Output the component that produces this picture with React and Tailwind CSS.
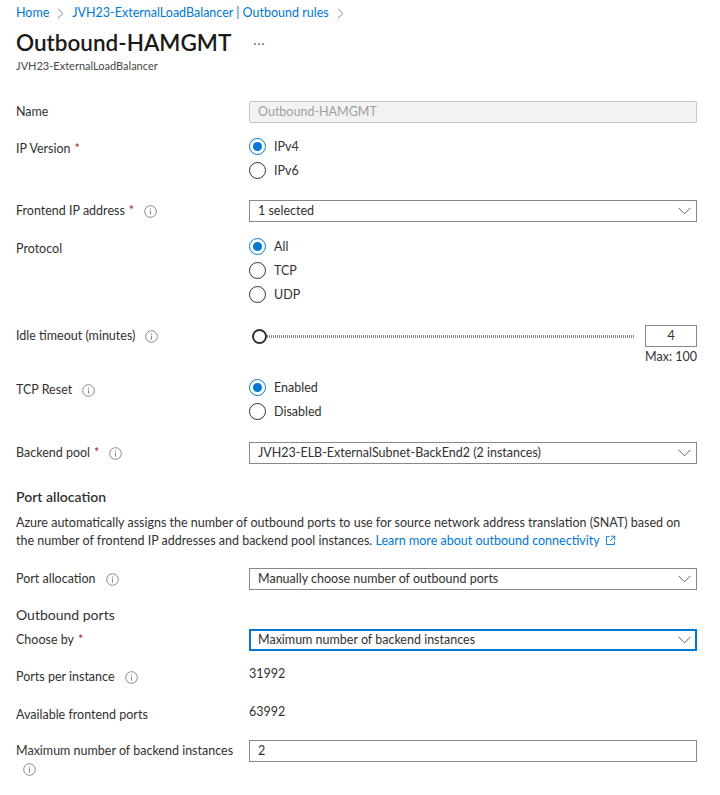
import React from 'react';

const font = { fontFamily: '"Segoe UI", Lato, "Liberation Sans", sans-serif' };

const InfoIcon = ({ className = '' }) => (
  <svg width="13" height="13" viewBox="0 0 13 13" className={`block shrink-0 ${className}`}>
    <circle cx="6.5" cy="6.5" r="5.8" fill="none" stroke="#8a8886" strokeWidth="1" />
    <line x1="6.5" y1="5.6" x2="6.5" y2="9.6" stroke="#8a8886" strokeWidth="1" />
    <circle cx="6.5" cy="3.9" r="0.7" fill="#8a8886" />
  </svg>
);

const Chevron = () => (
  <svg width="13" height="8" viewBox="0 0 13 8" className="shrink-0">
    <polyline points="0.5,0.8 6.5,6.8 12.5,0.8" fill="none" stroke="#605e5c" strokeWidth="1" />
  </svg>
);

const Crumb = () => (
  <svg width="7" height="11" viewBox="0 0 7 11" className="shrink-0 mx-[8px]">
    <polyline points="1,0.8 5.8,5.5 1,10.2" fill="none" stroke="#8a8886" strokeWidth="1" />
  </svg>
);

const Req = () => <span className="text-[#a4262c] ml-[4px]">*</span>;

const Label = ({ children, required, info, className = '' }) => (
  <div className={`w-[233px] shrink-0 text-[12.5px] text-[#323130] ${className}`}>
    <div className="h-[18px] flex items-center">
      <span>
        {children}
        {required && <Req />}
      </span>
      {info && <InfoIcon className="ml-[10px]" />}
    </div>
  </div>
);

const Radio = ({ checked, label }) => (
  <div className="h-6 flex items-center">
    <div
      className={`w-[17px] h-[17px] rounded-full border flex items-center justify-center ${
        checked ? 'border-[#0078d4]' : 'border-[#323130]'
      }`}
    >
      {checked && <div className="w-[9px] h-[9px] rounded-full bg-[#0078d4]" />}
    </div>
    <span className="ml-[8px] text-[12.5px] leading-[18px] pt-[1px] text-[#323130]">{label}</span>
  </div>
);

const Dropdown = ({ value, focused }) => (
  <div
    className={`h-[22px] flex items-center justify-between text-[12.5px] text-[#323130] bg-white ${
      focused ? 'border-2 border-[#0078d4] pl-[7px] pr-[4px]' : 'border border-[#8a8886] pl-[8px] pr-[5px]'
    }`}
  >
    <span>{value}</span>
    <Chevron />
  </div>
);

const App = () => {
  return (
    <div className="w-[720px] min-h-[795px] bg-white pl-4 pr-[23px]" style={font}>
      <div className="pt-[4px] h-[22px] text-[12.5px] leading-[18px] text-[#0078d4] flex items-center">
        <span>Home</span>
        <Crumb />
        <span>JVH23-ExternalLoadBalancer | Outbound rules</span>
        <Crumb />
      </div>

      <div className="mt-[5px] flex items-center h-[32px]">
        <h1 className="text-[22.5px] leading-[32px] font-semibold text-[#1b1a19]">Outbound-HAMGMT</h1>
        <span className="ml-[22px] mt-[2px] text-[12px] text-[#605e5c] tracking-[1px]">···</span>
      </div>
      <div className="text-[11px] leading-[14px] text-[#484644]">JVH23-ExternalLoadBalancer</div>

      {/* Name */}
      <div className="mt-[28px] flex items-center">
        <Label>Name</Label>
        <div className="flex-1 h-[22px] flex items-center px-[8px] bg-[#f3f2f1] border border-[#c8c6c4] rounded-[2px] text-[12.5px] text-[#a19f9d]">
          Outbound-HAMGMT
        </div>
      </div>

      {/* IP Version */}
      <div className="mt-[11px] flex">
        <Label required className="pt-[6px]">IP Version</Label>
        <div className="flex-1">
          <Radio checked label="IPv4" />
          <Radio label="IPv6" />
        </div>
      </div>

      {/* Frontend */}
      <div className="mt-[18px] flex items-center">
        <Label required info>Frontend IP address</Label>
        <div className="flex-1">
          <Dropdown value="1 selected" />
        </div>
      </div>

      {/* Protocol */}
      <div className="mt-[12px] flex">
        <Label className="pt-[6px]">Protocol</Label>
        <div className="flex-1">
          <Radio checked label="All" />
          <Radio label="TCP" />
          <Radio label="UDP" />
        </div>
      </div>

      {/* Idle timeout */}
      <div className="mt-[19px] flex items-center">
        <Label info>Idle timeout (minutes)</Label>
        <div className="flex-1 flex items-center">
          <div className="flex-1 flex items-center pl-[3px] pr-[10px]">
            <div className="w-[15px] h-[15px] rounded-full border-2 border-[#323130] bg-white shrink-0" />
            <div className="flex-1 h-[3px] bg-[repeating-linear-gradient(90deg,#8a8886_0_1px,transparent_1px_2px)]" />
          </div>
          <div className="w-[52px] h-[22px] border border-[#8a8886] flex items-center justify-center text-[12.5px] text-[#323130]">
            4
          </div>
        </div>
      </div>
      <div className="mt-[1px] text-right text-[12.5px] leading-[18px] text-[#323130]">Max: 100</div>

      {/* TCP Reset */}
      <div className="mt-[9px] flex">
        <Label info className="pt-[6px]">TCP Reset</Label>
        <div className="flex-1">
          <Radio checked label="Enabled" />
          <Radio label="Disabled" />
        </div>
      </div>

      {/* Backend pool */}
      <div className="mt-[19px] flex items-center">
        <Label required info>Backend pool</Label>
        <div className="flex-1">
          <Dropdown value="JVH23-ELB-ExternalSubnet-BackEnd2 (2 instances)" />
        </div>
      </div>

      {/* Port allocation section */}
      <h2 className="mt-[23px] text-[14px] leading-[20px] font-semibold text-[#323130]">Port allocation</h2>
      <p className="mt-[7px] text-[12.5px] leading-[18px] text-[#323130] whitespace-nowrap">
        Azure automatically assigns the number of outbound ports to use for source network address translation (SNAT) based on
        <br />
        the number of frontend IP addresses and backend pool instances.{' '}
        <span className="text-[#0078d4]">Learn more about outbound connectivity</span>
        <svg width="11" height="11" viewBox="0 0 11 11" className="inline-block ml-[5px] -mt-[3px] align-middle">
          <path d="M4.5 1.5H1.5V9.5H9.5V6.5" fill="none" stroke="#0078d4" strokeWidth="0.9" />
          <path d="M6 1.2H9.8V5M9.8 1.2L5 6" fill="none" stroke="#0078d4" strokeWidth="0.9" />
        </svg>
      </p>

      <div className="mt-[18px] flex items-center">
        <Label info>Port allocation</Label>
        <div className="flex-1">
          <Dropdown value="Manually choose number of outbound ports" />
        </div>
      </div>

      <div className="mt-[15px] text-[14px] leading-[20px] text-[#323130]">Outbound ports</div>

      <div className="mt-[4px] flex items-center">
        <Label required>Choose by</Label>
        <div className="flex-1">
          <Dropdown focused value="Maximum number of backend instances" />
        </div>
      </div>

      <div className="mt-[14px] flex">
        <Label info className="pt-[3px]">Ports per instance</Label>
        <div className="flex-1 text-[12.5px] leading-[18px] text-[#323130]">31992</div>
      </div>

      <div className="mt-[17px] flex">
        <Label className="pt-[3px]">Available frontend ports</Label>
        <div className="flex-1 text-[12.5px] leading-[18px] text-[#323130]">63992</div>
      </div>

      <div className="mt-[16px] flex pb-6">
        <div className="w-[233px] shrink-0 text-[12.5px] leading-[18px] text-[#323130] pt-[2px]">
          <div>Maximum number of backend instances</div>
          <div className="h-[18px] flex items-center pl-[7px]">
            <InfoIcon />
          </div>
        </div>
        <div className="flex-1 h-[22px] flex items-center px-[8px] border border-[#8a8886] text-[12.5px] text-[#323130]">
          2
        </div>
      </div>
    </div>
  );
};

export default App;
